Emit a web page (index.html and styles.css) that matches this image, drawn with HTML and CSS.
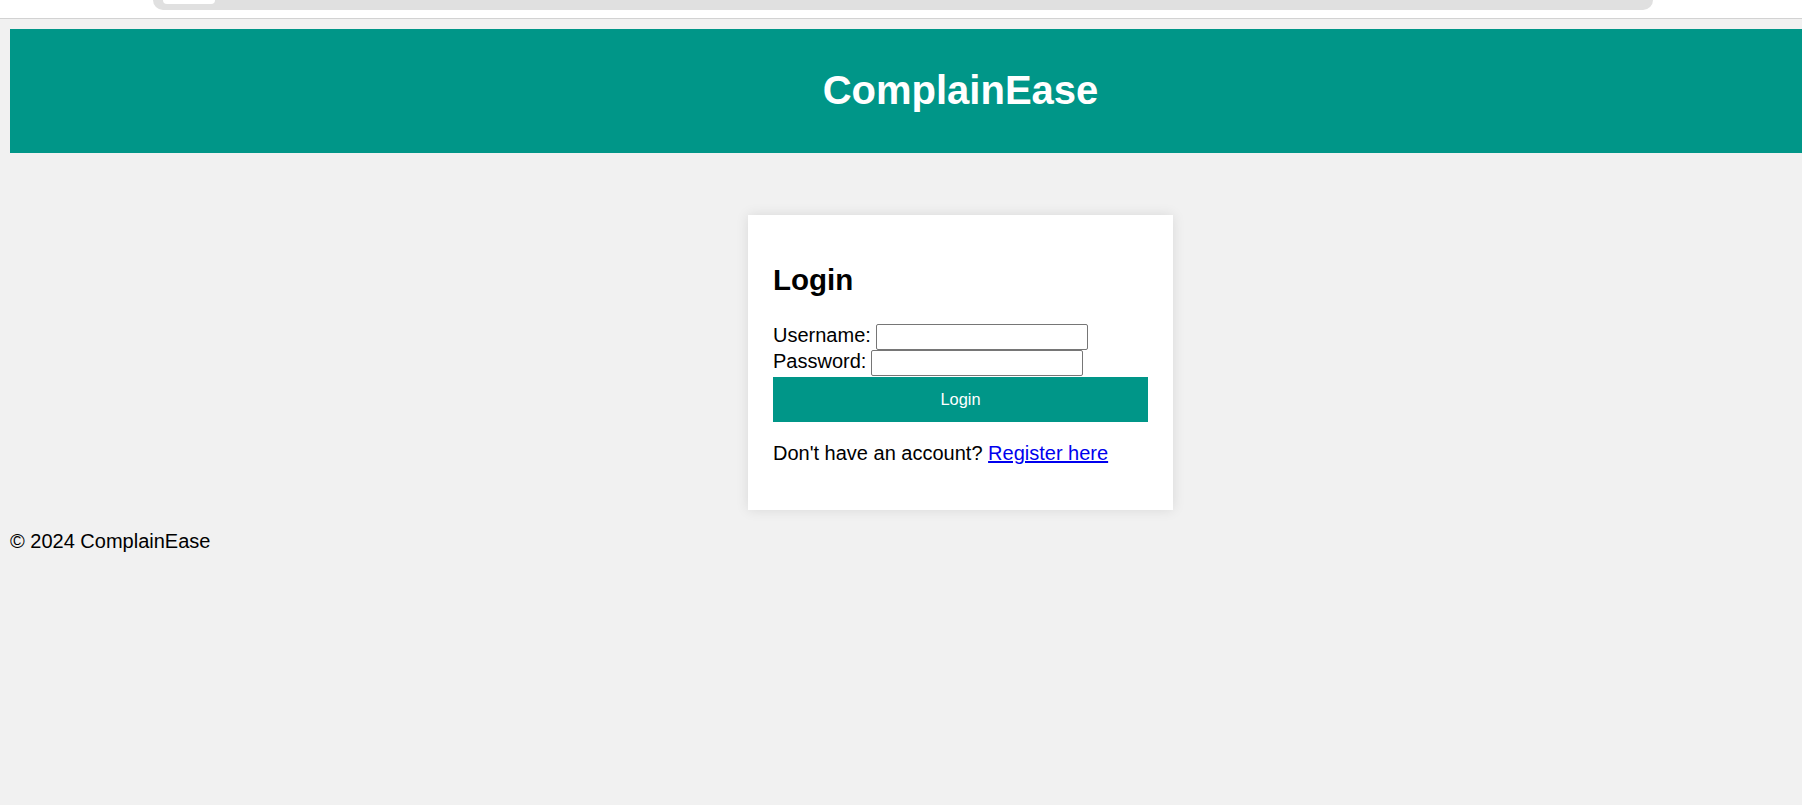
FILE: index.html
```html
<!DOCTYPE html>
<html lang="en">
<head>
<meta charset="utf-8">
<title>ComplainEase - Login</title>
<link rel="stylesheet" href="styles.css">
</head>
<body>
<div class="chrome">
  <div class="omnibox"><div class="omnibox-pill"></div></div>
</div>
<div class="page">
  <header class="site-header">
    <h1 class="site-title">ComplainEase</h1>
  </header>
  <main class="main">
    <section class="card">
      <h2 class="card-title">Login</h2>
      <form class="login-form">
        <div class="field-row">
          <label class="field-label" for="username">Username:</label>
          <input class="field-input" type="text" id="username" name="username">
        </div>
        <div class="field-row">
          <label class="field-label" for="password">Password:</label>
          <input class="field-input" type="password" id="password" name="password">
        </div>
        <button class="login-button" type="submit">Login</button>
      </form>
      <p class="register-text">Don't have an account? <a class="register-link" href="#">Register here</a></p>
    </section>
  </main>
  <footer class="site-footer">© 2024 ComplainEase</footer>
</div>
</body>
</html>
```

FILE: styles.css
```css
html, body {
  margin: 0;
  padding: 0;
}

body {
  background: #f1f1f1;
  font-family: "Liberation Sans", Arial, sans-serif;
  font-size: 20px;
  color: #000;
  overflow: hidden;
  width: 1802px;
  height: 805px;
}

.chrome {
  height: 18px;
  background: #ffffff;
  border-bottom: 1px solid #d2d2d2;
  display: flex;
  align-items: flex-start;
  padding-left: 153px;
}

.omnibox {
  width: 1500px;
  height: 10px;
  background: #e0e0e0;
  border-radius: 0 0 10px 10px;
  padding-left: 10px;
  box-sizing: border-box;
}

.omnibox-pill {
  width: 52px;
  height: 4px;
  background: #ffffff;
  border-radius: 0 0 8px 8px;
}

.page {
  width: 1921px;
  padding: 10px;
  box-sizing: border-box;
}

.site-header {
  background: #009688;
  height: 124px;
  box-sizing: border-box;
  padding-top: 39px;
  text-align: center;
}

.site-title {
  margin: 0;
  color: #ffffff;
  font-size: 40px;
  line-height: 44px;
  font-weight: bold;
}

.main {
  display: flex;
  justify-content: center;
  padding-top: 62px;
}

.card {
  width: 425px;
  box-sizing: border-box;
  background: #ffffff;
  padding: 48px 25px 46px;
  box-shadow: 0 0 12px rgba(0, 0, 0, 0.1);
}

.card-title {
  margin: 0 0 27px;
  font-size: 29.5px;
  line-height: 34px;
  font-weight: bold;
}

.login-form {
  display: flex;
  flex-direction: column;
}

.field-row {
  display: flex;
  align-items: flex-start;
  height: 26px;
  gap: 5px;
}

.field-label {
  line-height: 22px;
}

.field-input {
  width: 212px;
  height: 26px;
  box-sizing: border-box;
  border: 1px solid #767676;
  border-radius: 2px;
  padding: 1px 3px;
  margin: 0;
  font-family: "Liberation Sans", Arial, sans-serif;
  font-size: 16px;
  background: #ffffff;
}

.login-button {
  margin-top: 1px;
  height: 45px;
  width: 100%;
  border: none;
  background: #009688;
  color: #ffffff;
  font-family: "Liberation Sans", Arial, sans-serif;
  font-size: 16.4px;
  padding: 0;
  cursor: pointer;
}

.register-text {
  margin: 20px 0 0;
  line-height: 22px;
}

.register-link {
  color: #0000ee;
  text-decoration: underline;
}

.site-footer {
  margin-top: 20px;
  line-height: 22px;
}
```
